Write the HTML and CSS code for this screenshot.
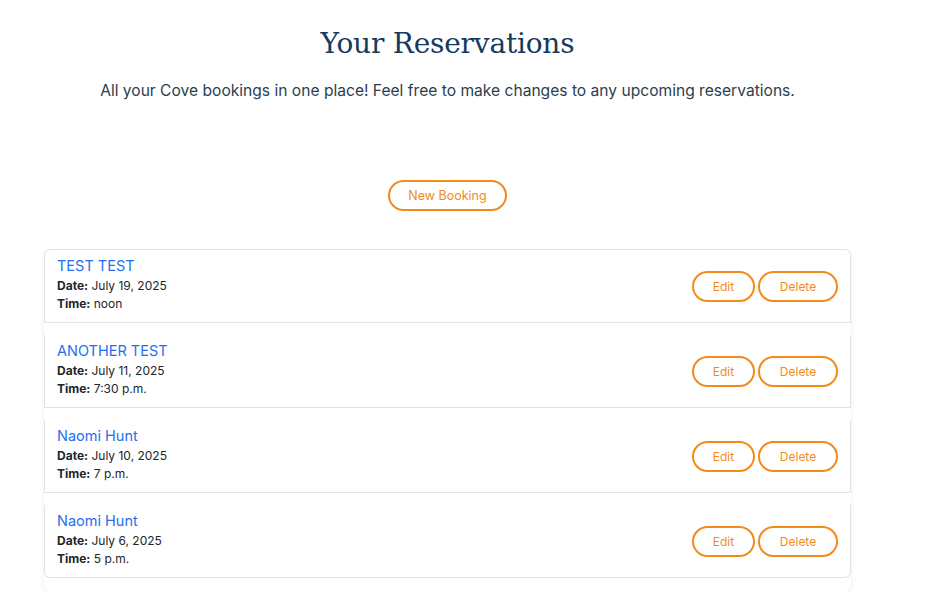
FILE: index.html
```html
<!DOCTYPE html>
<html lang="en">
<head>
<meta charset="utf-8">
<title>Your Reservations</title>
<link rel="stylesheet" href="styles.css">
</head>
<body>
<main class="page">
  <header class="intro">
    <h1 class="title">Your Reservations</h1>
    <p class="lead">All your Cove bookings in one place! Feel free to make changes to any upcoming reservations.</p>
  </header>
  <div class="actions">
    <button class="btn btn-new">New Booking</button>
  </div>
  <section class="card">
    <ul class="list">
      <li class="item">
        <div class="info">
          <div class="name">TEST TEST</div>
          <div class="meta"><strong>Date:</strong> July 19, 2025</div>
          <div class="meta"><strong>Time:</strong> noon</div>
        </div>
        <div class="item-actions">
          <button class="btn btn-edit">Edit</button>
          <button class="btn btn-delete">Delete</button>
        </div>
      </li>
      <li class="item">
        <div class="info">
          <div class="name">ANOTHER TEST</div>
          <div class="meta"><strong>Date:</strong> July 11, 2025</div>
          <div class="meta"><strong>Time:</strong> 7:30 p.m.</div>
        </div>
        <div class="item-actions">
          <button class="btn btn-edit">Edit</button>
          <button class="btn btn-delete">Delete</button>
        </div>
      </li>
      <li class="item">
        <div class="info">
          <div class="name">Naomi Hunt</div>
          <div class="meta"><strong>Date:</strong> July 10, 2025</div>
          <div class="meta"><strong>Time:</strong> 7 p.m.</div>
        </div>
        <div class="item-actions">
          <button class="btn btn-edit">Edit</button>
          <button class="btn btn-delete">Delete</button>
        </div>
      </li>
      <li class="item">
        <div class="info">
          <div class="name">Naomi Hunt</div>
          <div class="meta"><strong>Date:</strong> July 6, 2025</div>
          <div class="meta"><strong>Time:</strong> 5 p.m.</div>
        </div>
        <div class="item-actions">
          <button class="btn btn-edit">Edit</button>
          <button class="btn btn-delete">Delete</button>
        </div>
      </li>
    </ul>
  </section>
</main>
</body>
</html>
```
FILE: styles.css
```css
* { box-sizing: border-box; }
html, body { margin: 0; padding: 0; background: #ffffff; }
body {
  font-family: "Inter", "Open Sans", sans-serif;
  color: #212529;
}
.page {
  width: 807px;
  margin-left: 44px;
  padding-top: 24px;
}
.intro { text-align: center; }
.title {
  margin: 0;
  font-family: "DejaVu Serif", "Liberation Serif", serif;
  font-weight: 400;
  font-size: 28px;
  line-height: 40px;
  color: #163a5f;
  letter-spacing: -0.2px;
}
.lead {
  margin: 16px 0 0;
  font-size: 15.6px;
  line-height: 22px;
  color: #2c3e50;
}
.actions {
  display: flex;
  justify-content: center;
  margin-top: 78px;
}
.btn {
  font-family: inherit;
  background: #ffffff;
  border: 2px solid #f28b1a;
  color: #f28b1a;
  border-radius: 999px;
  font-size: 12px;
  height: 31px;
  padding: 0 18px;
  cursor: pointer;
}
.btn-new { width: 119px; padding: 0; font-size: 12.5px; }
.card {
  margin-top: 38px;
  border-radius: 6px;
  box-shadow: 0 2px 5px rgba(0, 0, 0, 0.08);
  padding-bottom: 13px;
}
.list {
  list-style: none;
  margin: 0;
  padding: 0;
}
.item {
  display: flex;
  align-items: center;
  justify-content: space-between;
  height: 73px;
  padding: 0 12px;
  border: 1px solid #dfe2e6;
  border-top-width: 0;
  margin-bottom: 12px;
}
.item:first-child {
  height: 74px;
  border-top-width: 1px;
  border-radius: 6px 6px 0 0;
}
.item:last-child {
  margin-bottom: 0;
  border-radius: 0 0 6px 6px;
}
.info { padding-bottom: 4px; }
.name {
  font-size: 14.5px;
  line-height: 22px;
  color: #1f6fef;
}
.meta {
  font-size: 12px;
  line-height: 18px;
  color: #212529;
}
.meta strong { font-weight: 700; }
.item-actions {
  display: flex;
  gap: 3px;
  padding-top: 1px;
}
.btn-edit { width: 63px; padding: 0; }
.btn-delete { width: 80px; padding: 0; }
```
